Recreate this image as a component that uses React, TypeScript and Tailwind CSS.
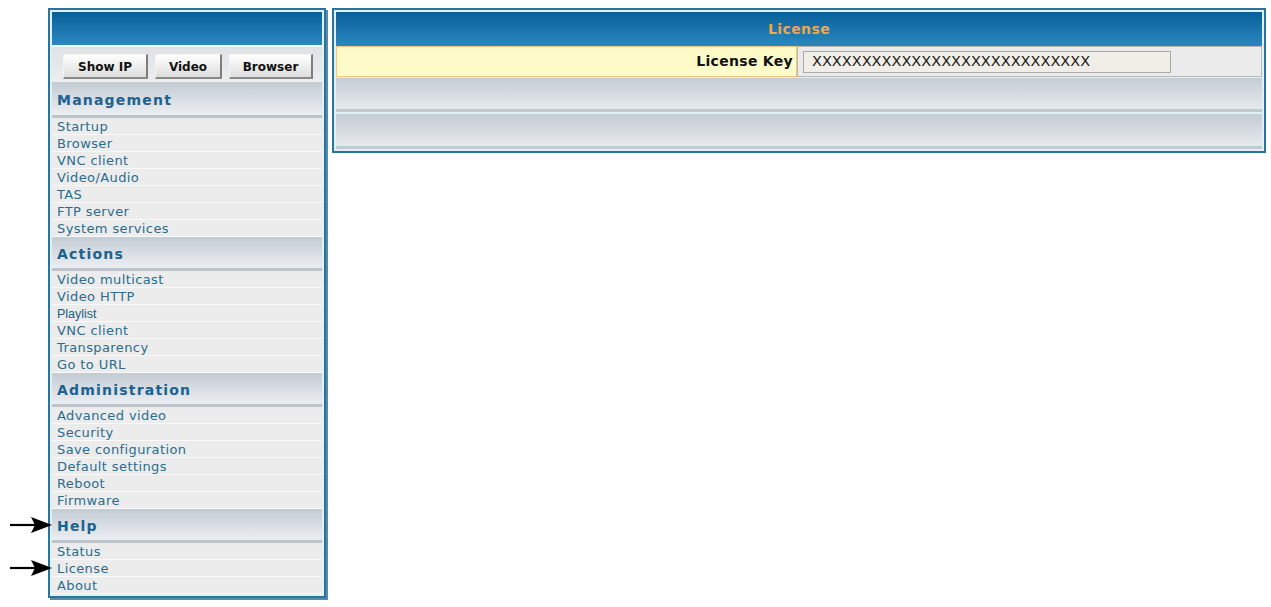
import type { ReactNode } from "react";

const sections: { title: string; items: { label: string; alt?: boolean }[] }[] = [
  {
    title: "Management",
    items: [
      { label: "Startup" },
      { label: "Browser" },
      { label: "VNC client" },
      { label: "Video/Audio" },
      { label: "TAS" },
      { label: "FTP server" },
      { label: "System services" },
    ],
  },
  {
    title: "Actions",
    items: [
      { label: "Video multicast" },
      { label: "Video HTTP" },
      { label: "Playlist", alt: true },
      { label: "VNC client" },
      { label: "Transparency" },
      { label: "Go to URL" },
    ],
  },
  {
    title: "Administration",
    items: [
      { label: "Advanced video" },
      { label: "Security" },
      { label: "Save configuration" },
      { label: "Default settings" },
      { label: "Reboot" },
      { label: "Firmware" },
    ],
  },
  {
    title: "Help",
    items: [{ label: "Status" }, { label: "License" }, { label: "About" }],
  },
];

// callout arrow pointing at a menu entry
function Pointer() {
  return (
    <svg width="42" height="18" viewBox="0 0 42 18" className="absolute -left-[42px] top-1/2 -translate-y-1/2">
      <line x1="0" y1="9" x2="26" y2="9" stroke="#000" strokeWidth="2.2" />
      <polygon points="21,1 42,9 21,17 25,9" fill="#000" />
    </svg>
  );
}

function NavButton({ children, width }: { children: ReactNode; width: string }) {
  return (
    <button
      className={`${width} h-[25px] border border-t-[#f4f4f4] border-l-[#f4f4f4] border-r-[#7d7d7d] border-b-[#8a8a8a] border-r-2 border-b-2 bg-gradient-to-b from-[#ffffff] to-[#dedede] pt-[2px] text-[12px] font-bold text-[#111]`}
    >
      {children}
    </button>
  );
}

function SectionHeader({ title, first }: { title: string; first?: boolean }) {
  return (
    <div
      className={`relative flex ${first ? "h-[36px]" : "h-[34px]"} items-center border-b-[3px] border-b-[#bcc3ca] bg-gradient-to-b from-[#c3cbd3] to-[#eceff2] pl-[5px] pt-[3px]`}
    >
      {title === "Help" ? <Pointer /> : null}
      <span className="text-[14px] font-bold tracking-[1.2px] text-[#1b6290]">{title}</span>
    </div>
  );
}

function MenuRow({ label, alt }: { label: string; alt?: boolean }) {
  return (
    <div className="relative flex h-[17px] items-center border-b border-b-[#fafafa] bg-[#ececec] pl-[5px] pt-[2px]">
      {label === "License" ? <Pointer /> : null}
      {alt ? (
        <span className="text-[12.5px] font-[Liberation_Sans,sans-serif] text-[#1e5f80]">{label}</span>
      ) : (
        <span className="text-[13px] tracking-[0.4px] text-[#2b6c8c]">{label}</span>
      )}
    </div>
  );
}

function Sidebar() {
  return (
    <aside className="w-[278px] border-2 border-[#2a739c] bg-[#dff0f7] p-[2px] shadow-[2px_2px_0_#5a8ba6]">
      <div className="h-[33px] bg-gradient-to-b from-[#08609a] to-[#2a88bf]" />
      <div className="flex h-[37px] items-center gap-[7px] border-t-2 border-t-[#f7f7f7] bg-gradient-to-b from-[#dfe3e6] to-[#eceeef] pl-[11px] pt-[3px]">
        <NavButton width="w-[85px]">Show IP</NavButton>
        <NavButton width="w-[67px]">Video</NavButton>
        <NavButton width="w-[84px]">Browser</NavButton>
      </div>
      {sections.map((section, index) => (
        <div key={section.title}>
          <SectionHeader title={section.title} first={index === 0} />
          {section.items.map((item, i) => (
            <MenuRow key={`${item.label}-${i}`} label={item.label} alt={item.alt} />
          ))}
        </div>
      ))}
    </aside>
  );
}

function LicensePanel() {
  return (
    <section className="w-[934px] border-2 border-[#2a739c] bg-[#dff0f7] p-[2px]">
      <div className="flex h-[34px] items-center justify-center bg-gradient-to-b from-[#08609a] to-[#2a88bf]">
        <span className="text-[14px] font-bold tracking-[0.4px] text-[#f2a54a]">License</span>
      </div>
      <div className="flex h-[31px]">
        <div className="flex w-[461px] items-center justify-end border border-[#f2c67c] bg-[#fffbc9] pr-[3px]">
          <span className="text-[14px] font-bold tracking-[0.3px] text-[#111]">License Key</span>
        </div>
        <div className="flex flex-1 items-center border border-[#b8b8b8] bg-[#ebebeb] pl-[5px]">
          <div className="flex h-[22px] w-[368px] items-center border border-[#a9a9a9] bg-[#f1eee8] pl-[8px] text-[14.5px] text-[#1a1a1a]">
            XXXXXXXXXXXXXXXXXXXXXXXXXXXX
          </div>
        </div>
      </div>
      <div className="mt-px h-[34px] border-b-[3px] border-b-[#c2c9cf] bg-gradient-to-b from-[#c5ccd3] to-[#e6eaed]" />
      <div className="mt-[2px] h-[35px] border-b-[3px] border-b-[#c2c9cf] bg-gradient-to-b from-[#c5ccd3] to-[#e6eaed]" />
    </section>
  );
}

export default function App() {
  return (
    <div className="min-h-[607px] bg-white pl-[48px] pt-[8px] font-['DejaVu_Sans',Verdana,sans-serif]">
      <div className="flex items-start gap-[6px]">
        <Sidebar />
        <LicensePanel />
      </div>
    </div>
  );
}
